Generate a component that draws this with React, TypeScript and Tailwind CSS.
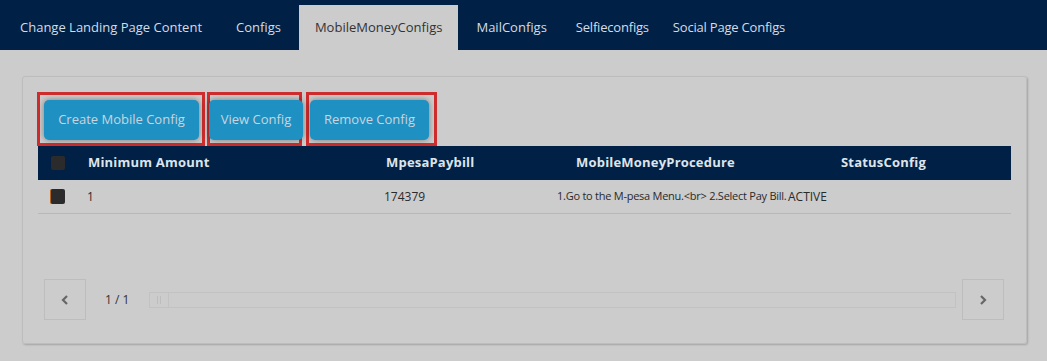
import React from "react";

const tabs = [
  { label: "Change Landing Page Content", pad: "px-4" },
  { label: "Configs", pad: "px-4" },
  { label: "MobileMoneyConfigs", pad: "px-4" },
  { label: "MailConfigs", pad: "px-4" },
  { label: "Selfieconfigs", pad: "px-[11px] tracking-[-0.2px]" },
  { label: "Social Page Configs", pad: "px-[11px] tracking-[-0.2px]" },
];

export default function App() {
  return (
    <div className="min-h-screen w-[1047px] h-[361px] bg-[#cccccc] font-['Open_Sans',sans-serif] overflow-hidden">
      {/* Top tabs */}
      <nav className="h-[50px] bg-[#002145] flex items-end pl-[4px] gap-[2px]">
        {tabs.map((t) => (
          <div
            key={t.label}
            className={`h-[45px] ${t.pad} flex items-center text-[13px] ${
              t.label === "MobileMoneyConfigs" ? "bg-[#cccccc] text-[#333333]" : "text-[#d5dce4]"
            }`}
          >
            {t.label}
          </div>
        ))}
      </nav>

      {/* Panel */}
      <div className="mt-[26px] ml-[22px] mr-[20px] h-[268px] border border-[#bdbdbd] rounded-[3px] shadow-[1px_1px_2px_rgba(0,0,0,0.2)] pt-[15px] px-[15px] flex flex-col">
        {/* Action buttons */}
        <div className="flex h-[54px] -ml-[1px]">
          <div className="w-[168px] h-[54px] border-[3px] border-[#cf2d2d] pl-[4px] pt-[5px]">
            <button className="w-[155px] h-[40px] rounded-[5px] bg-[#1f90c2] text-[#c9d5de] text-[13px] shadow-[0_0_6px_rgba(0,0,0,0.4)]">
              Create Mobile Config
            </button>
          </div>
          <div className="ml-[2px] w-[95px] h-[54px] border-[3px] border-[#cf2d2d] pt-[5px] -mr-[2px]">
            <button className="-ml-[1px] w-[94px] h-[40px] rounded-[5px] bg-[#1f90c2] text-[#c9d5de] text-[13px] shadow-[0_0_6px_rgba(0,0,0,0.4)]">
              View Config
            </button>
          </div>
          <div className="ml-[6px] w-[131px] h-[54px] border-[3px] border-[#cf2d2d] pl-[1px] pt-[5px]">
            <button className="w-[119px] h-[40px] rounded-[5px] bg-[#1f90c2] text-[#c9d5de] text-[13px] shadow-[0_0_6px_rgba(0,0,0,0.4)]">
              Remove Config
            </button>
          </div>
        </div>

        {/* Table */}
        <div className="text-[12px]">
          <div className="grid grid-cols-[42px_298px_172px_230px_1fr] h-[34px] bg-[#002145] items-center text-[#dfe4ea] font-bold text-[13px] tracking-[0.2px]">
            <div className="pl-[13px]">
              <div className="w-[14px] h-[14px] bg-[#2b2b2b] rounded-[2px]" />
            </div>
            <div className="pl-[8px]">Minimum Amount</div>
            <div className="pl-[8px]">MpesaPaybill</div>
            <div className="pl-[26px]">MobileMoneyProcedure</div>
            <div className="pl-[61px]">StatusConfig</div>
          </div>
          <div className="grid grid-cols-[42px_298px_172px_230px_1fr] h-[34px] border-b border-[#b8b8b8] items-center text-[#2a2a2a]">
            <div className="pl-[12px]">
              <div className="w-[15px] h-[15px] bg-[#2b2b2b] rounded-[2px] border-l border-[#b5651d]" />
            </div>
            <div className="pl-[7px]">1</div>
            <div className="pl-[6px]">174379</div>
            <div className="pl-[7px] whitespace-nowrap text-[11px] tracking-[-0.25px]">1.Go to the M-pesa Menu.&lt;br&gt; 2.Select Pay Bill.</div>
            <div className="pl-[8px]">ACTIVE</div>
          </div>
        </div>

        {/* Pagination */}
        <div className="mt-[65px] pl-[6px] pr-[7px] flex items-center h-[41px]">
          <button className="w-[42px] h-[41px] border border-[#bdbdbd] flex items-center justify-center">
            <svg width="10" height="12" viewBox="0 0 10 12">
              <path d="M7 2 L3 6 L7 10" fill="none" stroke="#666666" strokeWidth="2.2" />
            </svg>
          </button>
          <span className="ml-[19px] text-[12px] text-[#333333]">1 / 1</span>
          <div className="ml-[20px] flex-1 h-[16px] border border-[#c2c2c2] relative">
            <div className="absolute -top-[1px] -left-[1px] w-[20px] h-[16px] border border-[#c2c2c2] flex items-center justify-center gap-[2px]">
              <div className="w-px h-[8px] bg-[#bdbdbd]" />
              <div className="w-px h-[8px] bg-[#bdbdbd]" />
            </div>
          </div>
          <button className="ml-[6px] w-[42px] h-[41px] border border-[#bdbdbd] flex items-center justify-center">
            <svg width="10" height="12" viewBox="0 0 10 12">
              <path d="M3 2 L7 6 L3 10" fill="none" stroke="#666666" strokeWidth="2.2" />
            </svg>
          </button>
        </div>
      </div>
    </div>
  );
}
